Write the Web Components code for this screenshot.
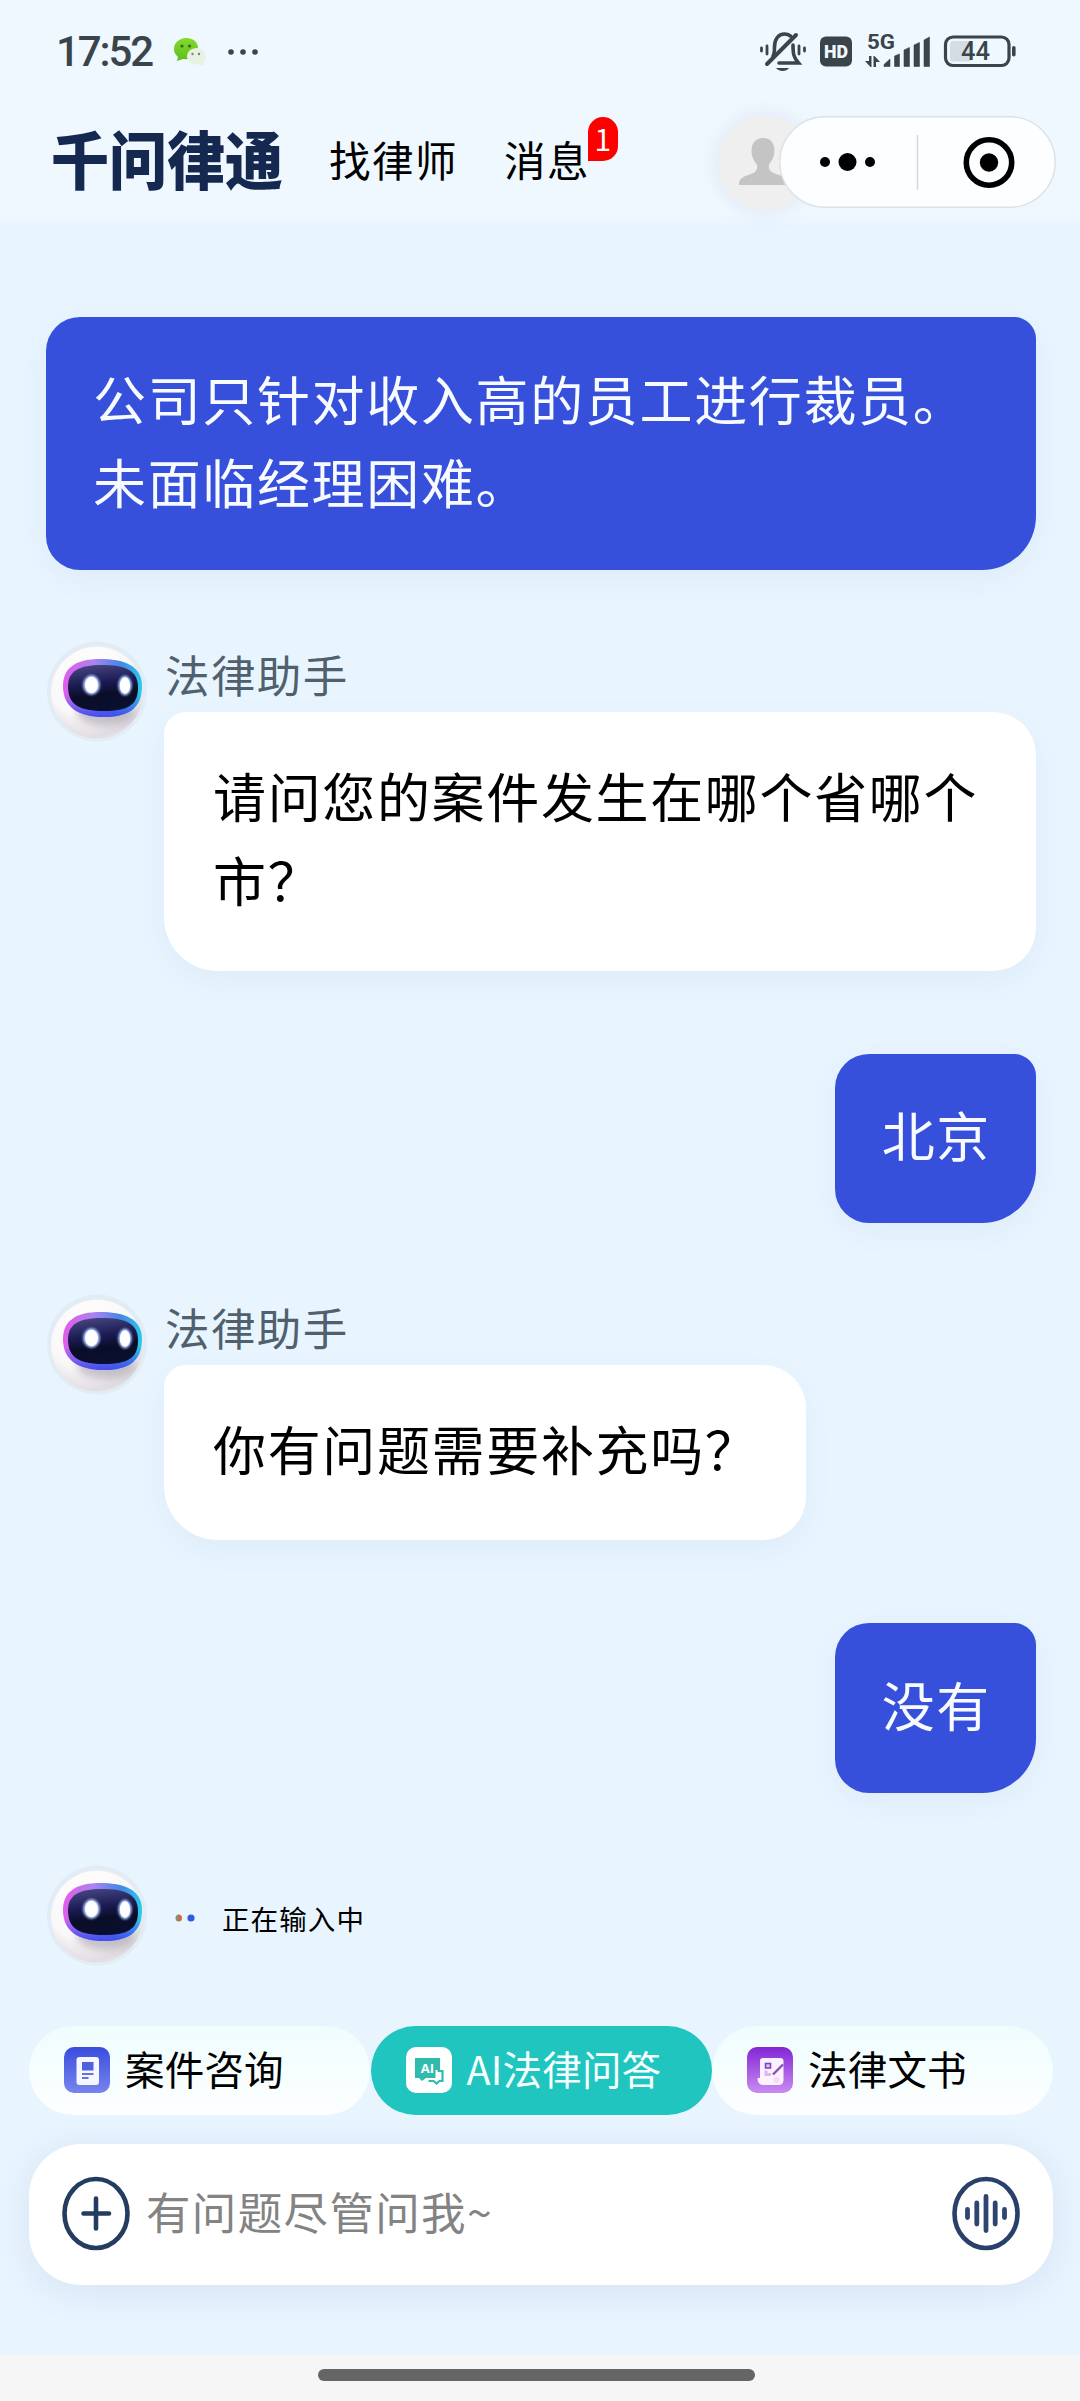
<!DOCTYPE html>
<html lang="zh-CN">
<head>
<meta charset="utf-8">
<title>千问律通</title>
<style>
html,body{margin:0;padding:0}
body{width:1080px;height:2401px;overflow:hidden;background:#e8f5ff;font-family:"Noto Sans CJK SC",sans-serif;color:#000}
</style>
</head>
<body>
<law-app></law-app>
<script>
const define = (name, html) => {
  const t = document.createElement('template');
  t.innerHTML = html;
  customElements.define(name, class extends HTMLElement {
    constructor() {
      super();
      this.attachShadow({ mode: 'open' }).appendChild(t.content.cloneNode(true));
    }
  });
};

define('status-bar', `
<style>
:host{display:flex;height:104px;box-sizing:border-box;padding:0 63px 0 56px;align-items:center;justify-content:space-between;color:#3a444b}
.l,.r{display:flex;align-items:center}
time{font:500 42px/50px Roboto,sans-serif;letter-spacing:-2.1px;width:98px;white-space:nowrap}
svg{display:block;overflow:visible}
.wx{margin-left:18px}.dots{margin-left:20px}
text{font-family:Roboto,sans-serif;fill:#3a444b}
</style>
<div class="l"><time>17:52</time>
<svg class="wx" width="36" height="30" viewBox="0 0 36 30">
<defs><linearGradient id="g" x2="0" y2="1"><stop stop-color="#85d92c"/><stop offset="1" stop-color="#5cbf1b"/></linearGradient></defs>
<path d="M14 1C7 1 2 6 2 12c0 4 2 6 4 8l-1 4 6-2c9 1 15-4 15-11C26 5 21 1 14 1z" fill="url(#g)"/>
<path d="M25 11c-6 0-10 4-10 8.500s5 8.500 11 8l6 1.500-1-3.500c2-1.500 3-3 3-6 0-5-4-8.500-9-8.500z" fill="#e9f2e2"/>
<g fill="#356b16"><circle cx="10" cy="9" r="1.600"/><circle cx="17.500" cy="9" r="1.600"/></g>
<g fill="#788474"><circle cx="20.500" cy="17" r="1.200"/><circle cx="27" cy="17" r="1.200"/></g>
</svg>
<svg class="dots" width="32" height="8" viewBox="0 0 32 8"><g fill="#3a444b"><circle cx="3" cy="4" r="2.800"/><circle cx="15" cy="4" r="2.800"/><circle cx="27" cy="4" r="2.800"/></g></svg>
</div>
<div class="r">
<svg width="258" height="44" viewBox="759 31 258 44">
<g fill="none" stroke="#3a444b" stroke-width="3.600" stroke-linecap="round">
<path d="M773 57c1.500-2 1.500-5 1.500-9 0-8 4-13 10-13 2.500 0 4 .500 6 2"/>
<path d="M793 46c0 9 .500 12 5.500 18H779"/>
<path d="M796 36L767 65" stroke-width="4"/>
<path d="M761.500 49v3M767 47v8M799 47v8M804.500 49v3" stroke-width="2.800"/></g>
<path d="M776 69h13c-2.500 4-10 4-13 0z" fill="#3a444b"/>
<rect x="820" y="37.500" width="32" height="30" rx="6" fill="#3a444b"/>
<text x="836" y="58.500" font-size="17.500" font-weight="900" text-anchor="middle" textLength="24" lengthAdjust="spacingAndGlyphs" style="fill:#f0f8ff">HD</text>
<text x="867" y="50" font-size="21" font-weight="700" textLength="28" lengthAdjust="spacingAndGlyphs">5G</text>
<g fill="#3a444b">
<path d="M869 57h2.500v11h-1L865 62h4zM873.500 57h1l5.500 6h-4v5h-2.500z"/>
<path d="M884 67.500v-2l6-5.500v7.500zM894.500 57l5-2v12.500h-5zM904 51l5.500-2.500v19H904zM914 46l5.500-2.500v24H914zM924 41l5.500-3v29.500H924z" stroke="#3a444b" stroke-width=".6" stroke-linejoin="round"/>
<rect x="1012" y="47" width="3.600" height="10.500" rx="1.800"/></g>
<rect x="950" y="42" width="22" height="20.500" rx="3" fill="#d3dde3"/>
<rect x="945.500" y="38" width="63.500" height="28.500" rx="7.500" fill="none" stroke="#3a444b" stroke-width="3.200"/>
<text x="975.500" y="61" font-size="25.500" text-anchor="middle" font-weight="500" textLength="29">44</text>
</svg></div>`);

define('msg-badge', `
<style>:host{display:block;width:29.500px;height:43.500px;border-radius:15px 15px 15px 0;background:#fe0000;color:#fff;font:30px/42px "Noto Sans CJK SC",sans-serif;text-align:center}</style><slot></slot>`);

define('nav-capsule', `
<style>:host{display:block;width:277px;height:92px}svg{display:block}</style>
<svg width="277" height="92" viewBox="0 0 277 92">
<rect x=".8" y=".8" width="275.400" height="90.400" rx="45.200" fill="#fcfeff" stroke="#dce2e6" stroke-width="1.400"/>
<circle cx="46" cy="46" r="5"/><circle cx="68.500" cy="46" r="9"/><circle cx="91" cy="46" r="5"/>
<path d="M138.500 19v55" stroke="#d6dade" stroke-width="1.500"/>
<circle cx="210" cy="46.500" r="22.700" fill="none" stroke="#000" stroke-width="5.600"/><circle cx="210" cy="46.500" r="9.200"/>
</svg>`);

define('app-header', `
<style>
:host{display:flex;height:120px;box-sizing:border-box;padding:12px 24px 0 51px;align-items:flex-start}
.logo{margin:-4px 0 0;width:234px;font:900 58px/90px "Noto Sans CJK SC",sans-serif;color:#142850;transform:scaleY(1.08);white-space:nowrap}
nav{display:flex;margin-left:44px}
nav span{position:relative;font-size:41.500px;letter-spacing:1.500px;line-height:86px;white-space:nowrap}
nav span+span{margin-left:46px}
msg-badge{position:absolute;left:84px;top:1px;letter-spacing:0}
.r{display:flex;margin-left:auto}
.av{width:94px;height:94px;border-radius:50%;background:#efefef;box-shadow:0 0 24px rgba(120,130,170,.16);margin-right:-33px}
nav-capsule{position:relative}
</style>
<h1 class="logo">千问律通</h1>
<nav><span>找律师</span><span>消息<msg-badge>1</msg-badge></span></nav>
<div class="r"><div class="av"><svg width="94" height="94" viewBox="0 0 94 94"><path d="M45 22c-8 0-11.500 6-11.500 13S37 46 39 49c1 5-2 8-7 9.500-7 2-11 4-11 10V69h48v-1c0-6-4-8-11-10-5-1.500-8-4.500-7-9.500 2-3 5.500-7 5.500-14S53 22 45 22z" fill="#c4c4c4"/></svg></div><nav-capsule></nav-capsule></div>`);

define('bot-avatar', `
<style>:host{display:block;width:104px;height:104px;flex:none}svg{display:block}</style>
<svg width="104" height="104" viewBox="0 0 104 104">
<defs>
<radialGradient id="s" cx=".42" cy=".3" r=".8"><stop stop-color="#fff"/><stop offset=".6" stop-color="#faf7f9"/><stop offset=".85" stop-color="#e2dde3"/><stop offset="1" stop-color="#efebef"/></radialGradient>
<linearGradient id="r" x1="0" y1=".45" x2="1" y2=".55"><stop stop-color="#e25cec"/><stop offset=".35" stop-color="#aa83ef"/><stop offset=".68" stop-color="#4388e8"/><stop offset="1" stop-color="#28cde9"/></linearGradient>
<linearGradient id="q" x1="0" y1="0" x2="0" y2="1"><stop offset=".6" stop-color="#4254ec" stop-opacity="0"/><stop offset="1" stop-color="#454bf0"/></linearGradient>
<linearGradient id="v" x1=".3" y1="0" x2=".5" y2="1"><stop stop-color="#464580"/><stop offset=".4" stop-color="#1b1b52"/><stop offset=".65" stop-color="#0a0d28"/><stop offset="1" stop-color="#0a1030"/></linearGradient>
<filter id="b" x="-.5" y="-.5" width="2" height="2"><feGaussianBlur stdDeviation="1.300"/></filter>
<filter id="c" x="-.2" y="-.4" width="1.400" height="1.800"><feGaussianBlur stdDeviation="4"/></filter>
<clipPath id="k"><circle cx="51" cy="52.500" r="46"/></clipPath>
</defs>
<circle cx="51" cy="51.500" r="50" fill="#e1ecf4"/>
<circle cx="51" cy="52.500" r="46" fill="url(#s)"/>
<g clip-path="url(#k)"><ellipse cx="60" cy="73" rx="29" ry="13" fill="#a9a4ae" opacity=".65" filter="url(#c)"/></g>
<path d="M17 46C17 27 31 19 54 19s42 6 42 27-12 31-38 31S17 67 17 46z" fill="url(#r)"/>
<path d="M17 46C17 27 31 19 54 19s42 6 42 27-12 31-38 31S17 67 17 46z" fill="url(#q)"/>
<path d="M22 46.500C22 31 33 25 56 25s36 5 36 22.500S82 71 58 71 22 65 22 46.500z" fill="url(#v)"/>
<ellipse cx="45.500" cy="45" rx="8.500" ry="10" fill="#a9c4ff" filter="url(#b)"/><ellipse cx="45.500" cy="45" rx="6.500" ry="8.200" fill="#fff"/>
<ellipse cx="79" cy="45.500" rx="6.800" ry="10" fill="#a9c4ff" filter="url(#b)"/><ellipse cx="79" cy="45.500" rx="5.200" ry="8.200" fill="#fff"/>
</svg>`);

define('user-message', `
<style>:host{display:flex;justify-content:flex-end}
div{box-sizing:border-box;padding:39.500px 45px 46.500px 47px;border-radius:34px 22px 54px 34px;background:#3650db;color:#f7faff;font-size:53px;line-height:83.750px;letter-spacing:1.650px;box-shadow:0 8px 30px rgba(70,80,160,.06)}
:host([wide]) div{flex:1;padding-bottom:46px}</style>
<div><slot></slot></div>`);

define('bot-message', `
<style>:host{display:flex;gap:13.500px}
.c{display:flex;flex-direction:column;align-items:flex-start;padding-top:6px}
.n{font-size:44.500px;letter-spacing:1.400px;line-height:56px;color:#50606c;height:66.500px;margin-left:1.500px}
.b{padding:42px 46px 49.500px 49.500px;border-radius:22px 43px 43px 54px;background:#fff;font-size:53px;line-height:83.500px;letter-spacing:1.650px;box-shadow:0 10px 30px rgba(90,100,160,.06)}</style>
<bot-avatar></bot-avatar><div class="c"><div class="n">法律助手</div><div class="b"><slot></slot></div></div>`);

define('typing-indicator', `
<style>:host{display:flex;align-items:center}
svg{display:block;margin:5px 0 0 25px}span{font-size:27.500px;letter-spacing:1.100px;line-height:40px;margin:5px 0 0 27px}</style>
<bot-avatar></bot-avatar>
<svg width="20" height="8" viewBox="0 0 20 8"><path d="M4 .500a3.500 3.500 0 0 0 0 7z" fill="#8b8c79"/><path d="M3.500 .500a3.500 3.500 0 0 1 0 7z" fill="#d0693f"/><circle cx="16" cy="4" r="3.600" fill="#2d5fdc"/></svg>
<span>正在输入中</span>`);

define('mode-tab', `
<style>:host{display:flex;box-sizing:border-box;width:341px;height:88.500px;border-radius:45px;padding-left:35px;align-items:center;gap:15px;font-size:39.500px;letter-spacing:.2px;background:linear-gradient(#effdfd,#fdfeff);white-space:nowrap}
:host([active]){background:#1fc5be;color:#f5ffff}
::slotted(svg){display:block;flex:none}
span{line-height:60px;margin-top:-4px}</style>
<slot name="icon"></slot><span><slot></slot></span>`);

define('chat-input', `
<style>:host{display:flex;box-sizing:border-box;height:141px;border-radius:52px;background:#fff;align-items:center;padding:0 32px 0 32px;box-shadow:0 6px 36px rgba(80,90,150,.12)}
span{flex:1;font-size:44.500px;letter-spacing:1.350px;line-height:66px;color:#838383;margin:-7px 0 0 15px}svg{display:block;margin-top:-1px}</style>
<svg width="70" height="76" viewBox="0 0 70 76"><ellipse cx="35" cy="37.500" rx="31.500" ry="34.500" fill="none" stroke="#233c60" stroke-width="4.600"/><path d="M22.500 37.500h25.500M35 22.500v30" stroke="#233c60" stroke-width="4.600" stroke-linecap="round"/></svg>
<span><slot></slot></span>
<svg width="70" height="76" viewBox="0 0 70 76"><ellipse cx="35" cy="37.500" rx="31.500" ry="34.500" fill="none" stroke="#28406a" stroke-width="4.600"/><path d="M16.500 33.500v8M25.800 27v21M35 20.500v34M44.200 27v21M53.500 33.500v8" stroke="#30456e" stroke-width="4.800" stroke-linecap="round"/></svg>`);

define('home-bar', `
<style>:host{display:flex;height:46px;background:#f6f6f6;box-sizing:border-box;padding-top:14px;justify-content:center}
i{display:block;width:437px;height:11.500px;border-radius:6px;background:#656565;margin-right:7px}</style><i></i>`);

define('law-app', `
<style>
:host{display:flex;flex-direction:column;width:1080px;height:2401px;background:#e8f5ff}
.top{background:linear-gradient(#f0f8ff 0,#f0f8ff 214px,#eaf5ff 224px)}
main{flex:1;display:flex;flex-direction:column;padding:93px 44px 0 46px}
user-message+bot-message{margin-top:69.500px}
bot-message+user-message{margin-top:83px}
typing-indicator{margin:70.500px 0 0}
.tabs{display:flex;padding:0 27px 0 29px;justify-content:space-between}
chat-input{margin:29.500px 27px 70px 29px}
</style>
<div class="top"><status-bar></status-bar><app-header></app-header></div>
<main>
<user-message wide>公司只针对收入高的员工进行裁员。<br>未面临经理困难。</user-message>
<bot-message>请问您的案件发生在哪个省哪个市？</bot-message>
<user-message>北京</user-message>
<bot-message>你有问题需要补充吗？</bot-message>
<user-message>没有</user-message>
<typing-indicator></typing-indicator>
</main>
<div class="tabs">
<mode-tab><svg slot="icon" width="46" height="46" viewBox="0 0 46 46"><defs><linearGradient id="a1" x2="0" y2="1"><stop stop-color="#3a4ddd"/><stop offset="1" stop-color="#7785ee"/></linearGradient></defs><rect width="46" height="46" rx="10" fill="url(#a1)"/><rect x="12.500" y="10" width="22.500" height="28" rx="3" fill="#f5f6ff"/><rect x="18" y="15" width="11.500" height="8.500" fill="#5061df"/><path d="M18 27h11.500M18 31h6.500" stroke="#6472df" stroke-width="2"/></svg>案件咨询</mode-tab>
<mode-tab active><svg slot="icon" width="46" height="46" viewBox="0 0 46 46"><rect width="46" height="46" rx="10" fill="#fff"/><path d="M9 11h25v12h-4.500v8H20l-4 3-3-3H9z" fill="#2fbcad"/><path d="M31.500 24h5v10h-3l-3 2.500-3-2.500h-5" fill="none" stroke="#2fbcad" stroke-width="2.200"/><text x="21.500" y="25.500" text-anchor="middle" font-family="Open Sans" font-weight="700" font-size="13" fill="#fff" letter-spacing="0">AI</text></svg>AI法律问答</mode-tab>
<mode-tab><svg slot="icon" width="46" height="46" viewBox="0 0 46 46"><defs><linearGradient id="a3" x2="0" y2="1"><stop stop-color="#8226d5"/><stop offset="1" stop-color="#c98cf1"/></linearGradient></defs><rect width="46" height="46" rx="10" fill="url(#a3)"/><path d="M16 11h17q3.500 0 3.500 3v19q0 5-5 5H16q-5.500 0-5.500-7h2.500V14q0-3 3-3z" fill="#fbf1ff"/><rect x="18.500" y="16.500" width="5" height="4.500" fill="#dcc2ef" stroke="#8744bc" stroke-width="1.600"/><path d="M19 23.500v4h5" fill="none" stroke="#d9b9ee" stroke-width="3"/><path d="M26 27.500L36 17.500" stroke="#8b50bd" stroke-width="2.400"/><circle cx="29.500" cy="33" r="3" fill="#f2dcf5"/></svg>法律文书</mode-tab>
</div>
<chat-input>有问题尽管问我~</chat-input>
<home-bar></home-bar>`);
</script>
</body>
</html>
